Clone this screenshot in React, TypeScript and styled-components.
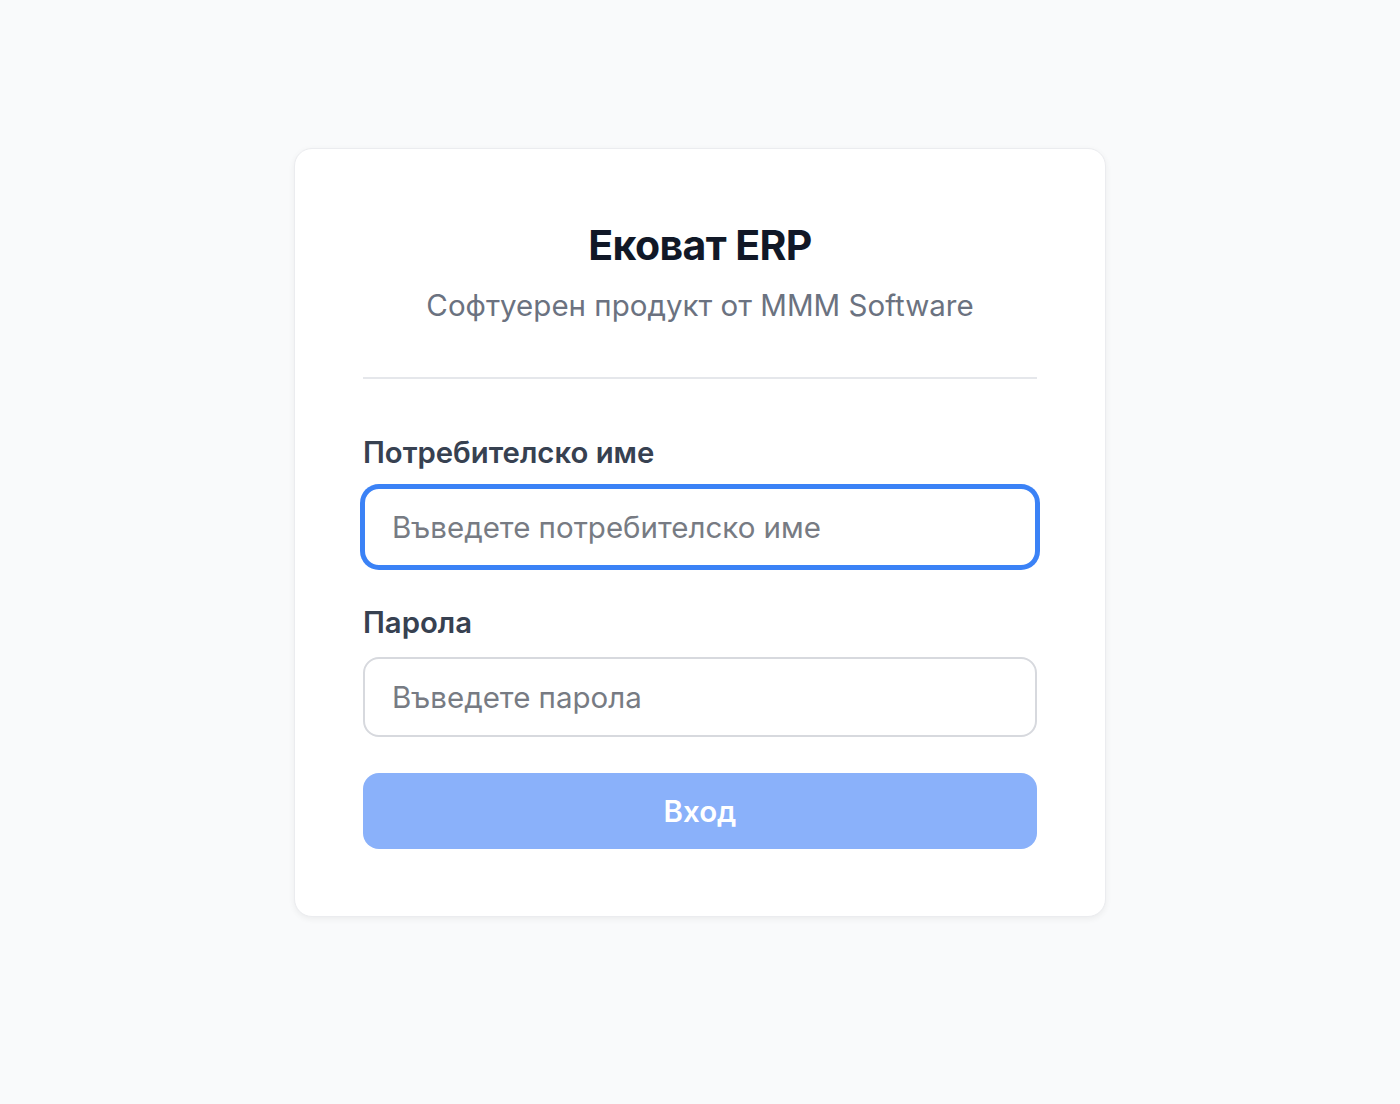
import React, { useState } from 'react';
import styled, { createGlobalStyle } from 'styled-components';

const GlobalStyle = createGlobalStyle`
  html, body {
    margin: 0;
    padding: 0;
    background: #f9fafb;
    font-family: Inter, "Noto Sans", "Liberation Sans", sans-serif;
  }
  * {
    box-sizing: border-box;
  }
`;

const Page = styled.div`
  min-height: 1104px;
  display: flex;
  justify-content: center;
  align-items: flex-start;
  padding-top: 148px;
`;

const Card = styled.div`
  width: 812px;
  background: #ffffff;
  border: 1px solid #ebecef;
  border-radius: 18px;
  box-shadow: 0 2px 6px rgba(0, 0, 0, 0.06);
  padding: 68px 68px 67px;
`;

const Header = styled.div`
  text-align: center;
  padding-top: 4px;
  padding-bottom: 52px;
  border-bottom: 2px solid #e5e7eb;
  margin-bottom: 54px;
`;

const Title = styled.h1`
  margin: 0;
  font-size: 41px;
  line-height: 48px;
  font-weight: 700;
  color: #111827;
  letter-spacing: -0.6px;
`;

const Subtitle = styled.p`
  margin: 16px 0 0;
  font-size: 29.5px;
  line-height: 40px;
  color: #6b7280;
`;

const Form = styled.form`
  display: flex;
  flex-direction: column;
`;

const Field = styled.div`
  display: flex;
  flex-direction: column;
  gap: 14px;
  margin-bottom: 36px;
`;

const Label = styled.label`
  font-size: 29.3px;
  line-height: 40px;
  font-weight: 600;
  color: #374151;
`;

const Input = styled.input<{ $focused?: boolean }>`
  width: 100%;
  height: 80px;
  padding: 0 27px;
  font-family: inherit;
  font-size: 29.5px;
  color: #111827;
  background: #ffffff;
  border: 2px solid ${(p) => (p.$focused ? '#3b82f6' : '#d7d9de')};
  border-radius: 16px;
  outline: none;
  box-shadow: ${(p) => (p.$focused ? '0 0 0 3px #3b82f6' : 'none')};

  &::placeholder {
    color: #777b83;
  }
`;

const SubmitButton = styled.button`
  height: 76px;
  width: 100%;
  border: none;
  border-radius: 16px;
  background: #8ab1fa;
  color: #ffffff;
  font-family: inherit;
  font-size: 29.5px;
  font-weight: 600;
  cursor: not-allowed;
`;

export default function App() {
  const [username, setUsername] = useState('');
  const [password, setPassword] = useState('');

  return (
    <>
      <GlobalStyle />
      <Page>
        <Card>
          <Header>
            <Title>Ековат ERP</Title>
            <Subtitle>Софтуерен продукт от MMM Software</Subtitle>
          </Header>
          <Form onSubmit={(e) => e.preventDefault()}>
            <Field>
              <Label htmlFor="username">Потребителско име</Label>
              <Input
                id="username"
                $focused
                placeholder="Въведете потребителско име"
                value={username}
                onChange={(e) => setUsername(e.target.value)}
              />
            </Field>
            <Field>
              <Label htmlFor="password">Парола</Label>
              <Input
                id="password"
                type="password"
                placeholder="Въведете парола"
                value={password}
                onChange={(e) => setPassword(e.target.value)}
              />
            </Field>
            <SubmitButton type="submit" disabled={!username || !password}>
              Вход
            </SubmitButton>
          </Form>
        </Card>
      </Page>
    </>
  );
}
